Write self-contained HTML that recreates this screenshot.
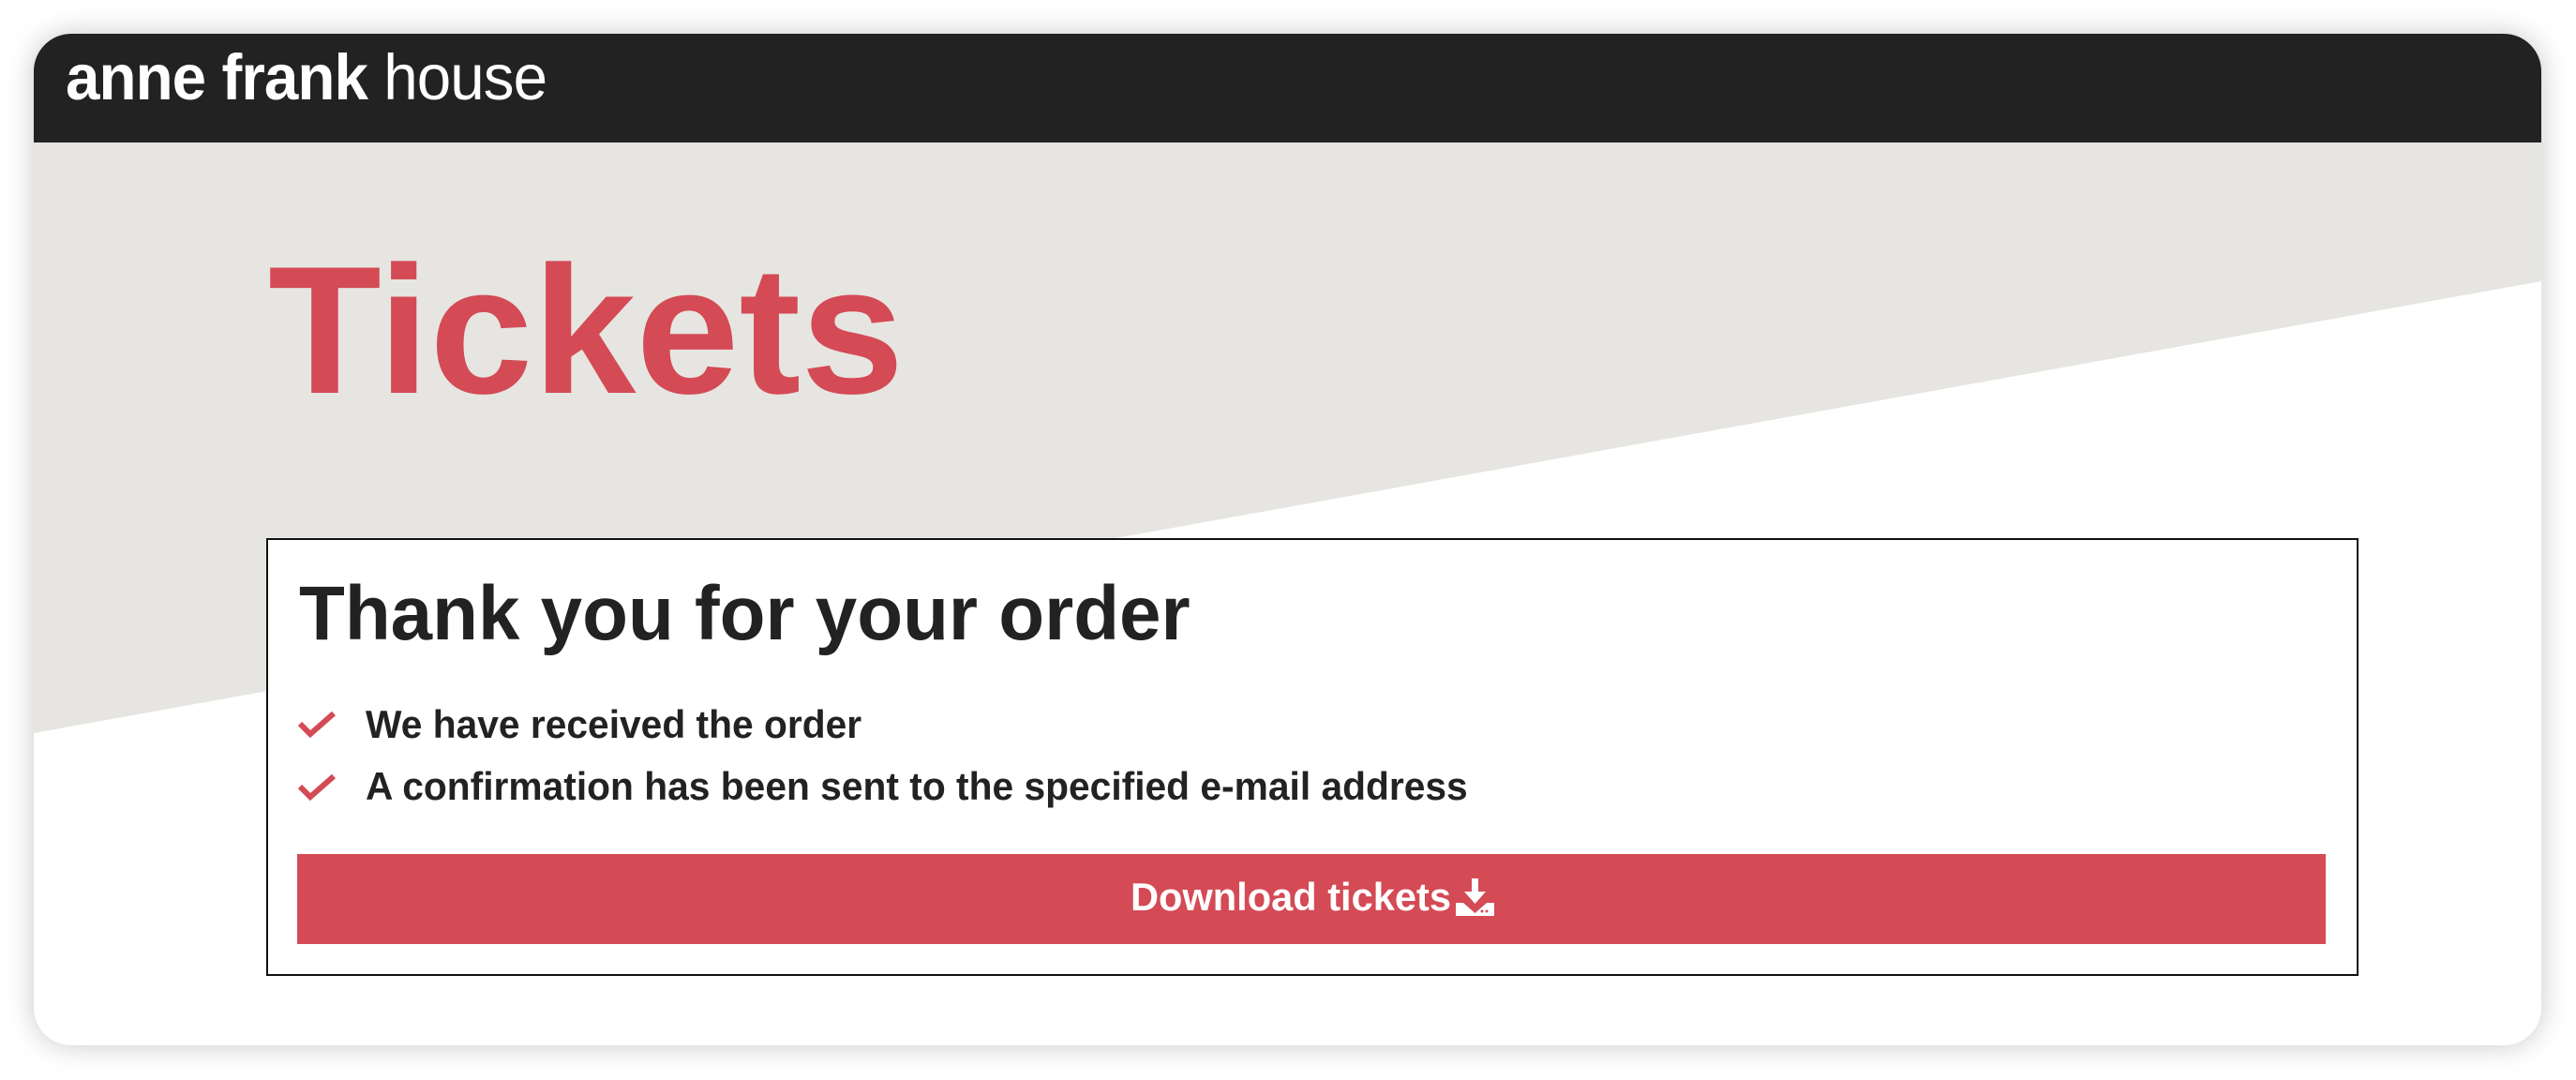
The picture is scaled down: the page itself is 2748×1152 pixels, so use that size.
<!DOCTYPE html>
<html><head><meta charset="utf-8"><style>
*{margin:0;padding:0;box-sizing:border-box}
body{width:2748px;height:1152px;background:#fff;position:relative;overflow:hidden;font-family:"Liberation Sans",sans-serif}
.card{position:absolute;left:36px;top:36px;width:2675px;height:1079px;border-radius:40px;background:#fff;overflow:hidden;box-shadow:0 0 30px rgba(0,0,0,.22)}
.hdr{position:absolute;left:0;top:0;width:100%;height:116px;background:#222}
.logo{position:absolute;left:34px;top:7px;color:#fff;font-size:69px;white-space:nowrap;transform:scaleX(.95);transform-origin:left top;letter-spacing:-1px}
.logo b{font-weight:700}
.logo span{font-weight:400}
.bg{position:absolute;left:0;top:116px}
.tickets{position:absolute;left:250px;top:220px;color:#d44a55;font-weight:700;font-size:194px;line-height:1;white-space:nowrap;transform:scaleX(1.02);transform-origin:left top}
.box{position:absolute;left:248px;top:538px;width:2232px;height:467px;border:2px solid #111;background:#fff}
.h{position:absolute;left:33px;top:30px;font-size:82px;font-weight:700;color:#222;white-space:nowrap;transform:scaleX(.975);transform-origin:left top;line-height:1.2}
.it{position:absolute;left:104px;font-size:42px;font-weight:700;color:#222;white-space:nowrap;transform:scaleX(.97);transform-origin:left top;line-height:1.2}
.ck{position:absolute;left:31px}
.btn{position:absolute;left:31px;top:335px;width:2164px;height:96px;background:#d44a55}
.bt{position:absolute;left:889px;top:21px;font-size:42px;font-weight:700;color:#fff;white-space:nowrap;transform:scaleX(.99);transform-origin:left top;line-height:1.2}
.ic{position:absolute;left:1236px;top:26px}
</style></head><body>
<div class="card">
<svg class="bg" width="2675" height="700"><polygon points="0,0 2675,0 2675,148 0,630" fill="#e6e5e1"/></svg>
<div class="hdr"><div class="logo"><b>anne frank</b><span> house</span></div></div>
<div class="tickets">Tickets</div>
<div class="box">
<div class="h">Thank you for your order</div>
<svg class="ck" style="top:181px" width="42" height="32" viewBox="0 0 42 32"><path d="M3 15 L14 26 L39 4" stroke="#d44a55" stroke-width="6" fill="none"/></svg>
<div class="it" style="top:172px">We have received the order</div>
<svg class="ck" style="top:248px" width="42" height="32" viewBox="0 0 42 32"><path d="M3 15 L14 26 L39 4" stroke="#d44a55" stroke-width="6" fill="none"/></svg>
<div class="it" style="top:238px">A confirmation has been sent to the specified e-mail address</div>
<div class="btn"><div class="bt">Download tickets</div>
<svg class="ic" width="41" height="40" viewBox="0 0 41 40"><path d="M17 0h7v14h8L20.5 27 9 14h8z" fill="#fff"/><path d="M0 26h8l12.5 11L33 26h8v14H0z" fill="#fff"/><circle cx="28" cy="35" r="1.5" fill="#d44a55"/><circle cx="33" cy="35" r="1.5" fill="#d44a55"/></svg>
</div>
</div>
</div>
</body></html>
